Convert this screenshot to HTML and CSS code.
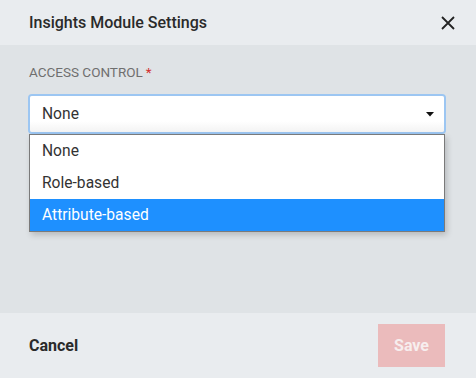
FILE: index.html
```html
<!DOCTYPE html>
<html>
<head>
<meta charset="utf-8">
<link rel="stylesheet" href="styles.css">
</head>
<body>
<div class="dialog">
  <header class="head">
    <h1 class="title">Insights Module Settings</h1>
    <button class="close" aria-label="Close">
      <svg width="14" height="14" viewBox="0 0 14 14"><path d="M1 1L13 13M13 1L1 13" stroke="#222" stroke-width="1.8" fill="none"/></svg>
    </button>
  </header>
  <main class="body">
    <div class="label">ACCESS CONTROL<span class="req">*</span></div>
    <div class="field">
      <div class="select">
        <span>None</span>
        <svg class="arrow" width="8" height="5" viewBox="0 0 8 5"><path d="M0 0H8L4 4.5Z" fill="#111"/></svg>
      </div>
      <ul class="menu">
        <li class="opt">None</li>
        <li class="opt">Role-based</li>
        <li class="opt sel">Attribute-based</li>
      </ul>
    </div>
  </main>
  <footer class="foot">
    <button class="cancel">Cancel</button>
    <button class="save">Save</button>
  </footer>
</div>
</body>
</html>
```
FILE: styles.css
```css
html, body { margin: 0; padding: 0; }
body { font-family: Roboto, "Liberation Sans", sans-serif; width: 476px; height: 378px; overflow: hidden; }
.dialog { display: flex; flex-direction: column; height: 378px; }
.head { height: 45px; background: #e9ecef; display: flex; align-items: center; justify-content: space-between; padding: 0 21px 0 29px; box-sizing: border-box; }
.title { margin: 0; font-size: 16px; font-weight: 500; color: #2a2a2a; letter-spacing: 0; }
.close { border: 0; background: none; padding: 0; width: 14px; height: 14px; display: flex; cursor: pointer; }
.body { flex: 1; background: #dfe3e6; padding: 19px 30px 0 29px; }
.label { font-size: 13.5px; color: #6f6f6f; line-height: 16px; }
.req { color: #d32f2f; margin-left: 3px; }
.field { position: relative; margin-top: 16px; width: 416px; }
.select { height: 36px; box-sizing: border-box; background: linear-gradient(#fff 70%, #f3f3f3); border-radius: 2px; box-shadow: 0 0 0 2px #9cc6f2; display: flex; align-items: center; justify-content: space-between; padding: 0 10px 0 12px; font-size: 15.6px; color: #333; margin-left: 1px; margin-right: 1px; }
.arrow { display: block; }
.menu { position: absolute; left: 0; top: 38px; width: 416px; box-sizing: border-box; margin: 0; padding: 0; list-style: none; background: #fff; border: 1px solid #7a7a7a; box-shadow: 2px 3px 6px rgba(0,0,0,0.18); }
.opt { height: 32px; line-height: 32px; padding-left: 12px; font-size: 15.6px; color: #333; }
.opt.sel { background: #1e90ff; color: #fff; }
.foot { height: 65px; background: #e9ecef; display: flex; align-items: center; justify-content: space-between; padding: 0 31px 0 29px; box-sizing: border-box; }
.cancel { border: 0; background: none; padding: 0; font-family: inherit; font-size: 16px; font-weight: 700; color: #2a2a2a; }
.save { border: 0; background: #ebbbbc; width: 67px; height: 43px; font-family: inherit; font-size: 16px; font-weight: 700; color: #f7eeee; }
```
